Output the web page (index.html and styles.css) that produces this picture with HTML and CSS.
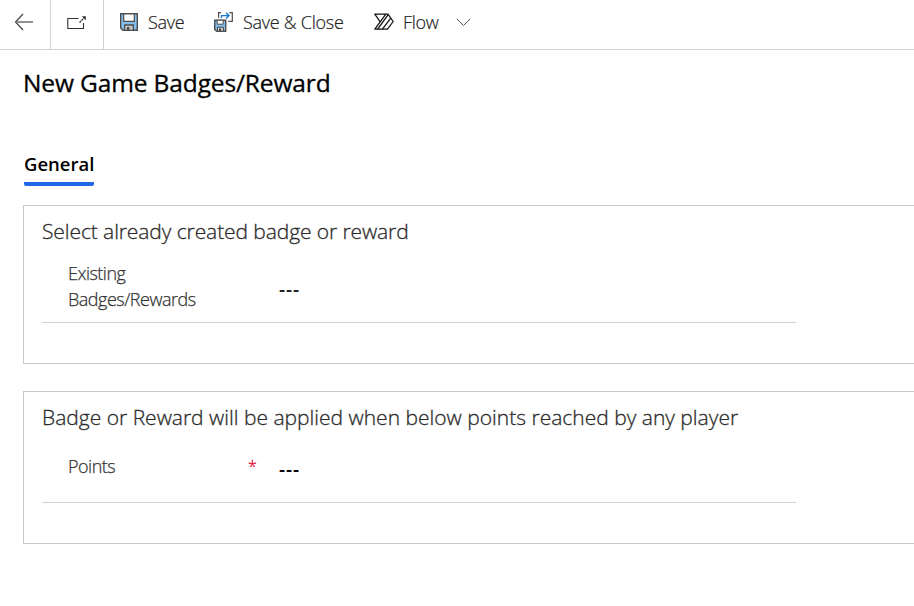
FILE: index.html
```html
<!DOCTYPE html>
<html lang="en">
<head>
<meta charset="utf-8">
<title>New Game Badges/Reward</title>
<link rel="stylesheet" href="styles.css">
</head>
<body>
<header class="toolbar">
  <button class="nav back" aria-label="Back">
    <svg width="20" height="18" viewBox="0 0 20 18" fill="none" stroke="#444"><path d="M9 1 1.5 9 9 17" stroke-width="1.2"/><path d="M1.5 9H19" stroke="#777" stroke-width="1.6"/></svg>
  </button>
  <button class="nav popout" aria-label="Open in new window">
    <svg width="20" height="16" viewBox="0 0 20 16" fill="none" stroke="#333"><path d="M11.5 3.5H.8v10h15.7V8" stroke-width="1.1"/><path d="M12.5 7.5 18 2" stroke-width="1.3" stroke-dasharray="2.2 .7"/><path d="M14.8 1.2h4v4z" fill="#333" stroke="none"/></svg>
  </button>
  <button class="cmd save">
    <svg width="18" height="18" viewBox="0 0 18 18"><path d="M.7.7h16.6v16.6H3L.7 15z" fill="#83beec" stroke="#4d4d4d" stroke-width="1.4"/><path d="M3.7.9h10.6v7.4H3.7z" fill="#fff" stroke="#4d4d4d" stroke-width="1.2"/><path d="M4.7 12h8.6v5.3H4.7z" fill="#c8c8c8" stroke="#4d4d4d" stroke-width="1.3"/><path d="M7 14h2.4v3.5H7z" fill="#4d4d4d"/></svg>
    <span class="label">Save</span>
  </button>
  <button class="cmd close">
    <svg width="20" height="20" viewBox="0 0 20 20"><path d="M.7 8.2h11v11h-9L.7 17.5z" fill="#83beec" stroke="#4d4d4d" stroke-width="1.4"/><path d="M3.2 8.2h6v4h-6z" fill="#fff" stroke="#4d4d4d"/><path d="M3.5 15.2h6v4h-6z" fill="#c8c8c8" stroke="#4d4d4d"/><path d="M5 16.5h2v3H5z" fill="#4d4d4d"/><path d="M7 .7H4.6v5M15.5.7h2.8v8.6h-4" fill="none" stroke="#4d4d4d" stroke-width="1.2"/><path d="M7.5 6V3.6h7M12 .8l3 2.8-3 2.8" fill="none" stroke="#1979ca" stroke-width="1.4"/></svg>
    <span class="label">Save &amp; Close</span>
  </button>
  <button class="cmd flow">
    <svg width="20" height="18" viewBox="0 0 20 18" fill="none" stroke="#111" stroke-width="1.25" stroke-linejoin="round"><path d="M.8 1.2H14l5.2 7.3-5.7 7.7H.8L6.2 8.8z"/><path d="M6.2 8.8 11.8 1.2M3.6 16.2 14.2 1.6M8.4 16.2 16.8 5"/></svg>
    <span class="label">Flow</span>
    <svg class="chevron" width="15" height="9" viewBox="0 0 15 9" fill="none" stroke="#555"><path d="m.7.8 6.8 6.7L14.3.8"/></svg>
  </button>
</header>
<main>
  <h1>New Game Badges/Reward</h1>
  <nav class="tabs"><a class="tab">General</a></nav>
  <section class="card existing">
    <h2>Select already created badge or reward</h2>
    <div class="row">
      <span class="name">Existing<br>Badges/Rewards</span>
      <span class="required"></span>
      <span class="value">---</span>
    </div>
  </section>
  <section class="card points">
    <h2>Badge or Reward will be applied when below points reached by any player</h2>
    <div class="row">
      <span class="name">Points</span>
      <span class="required">*</span>
      <span class="value">---</span>
    </div>
  </section>
</main>
</body>
</html>
```
FILE: styles.css
```css
* { box-sizing: border-box; }
body {
  margin: 0;
  height: 606px;
  overflow: hidden;
  background: #fff;
  color: #333;
  font-family: "Open Sans", "Noto Sans", sans-serif;
}
button {
  padding: 0;
  border: 0;
  background: none;
  color: inherit;
  font: inherit;
}
svg { display: block; flex: none; }
.toolbar {
  display: flex;
  height: 50px;
  border-bottom: 1px solid #d2d2d2;
}
.nav {
  display: flex;
  border-right: 1px solid #d2d2d2;
}
.back { width: 51px; padding: 13px 0 0 14px; }
.popout { width: 53px; padding: 15px 0 0 16px; }
.cmd {
  display: flex;
  align-items: center;
  gap: 10px;
  height: 44px;
  font-size: 18px;
  white-space: nowrap;
}
.save { margin-left: 16px; width: 94px; }
.close { width: 160px; gap: 9px; }
.flow { gap: 9px; }
.chevron { margin-left: 8px; }
.label {
  width: max-content;
  color: #222;
  font-weight: 300;
  letter-spacing: -0.27px;
  -webkit-text-stroke: 0.2px;
}
main { padding-left: 23px; }
h1 {
  margin: 16px 0 0;
  height: 34px;
  color: #000;
  font-size: 24.5px;
  font-weight: 500;
  letter-spacing: -0.13px;
  line-height: 34px;
  white-space: nowrap;
  -webkit-text-stroke: 0.3px;
}
.tabs { display: flex; height: 105px; padding: 50px 0 0 1px; }
.tab {
  width: 70px;
  height: 36px;
  color: #000;
  font-size: 18.5px;
  font-weight: 600;
  line-height: 28px;
  background: linear-gradient(#2266e3, #2266e3) bottom / 100% 4px no-repeat;
  border-radius: 2px;
}
.card {
  height: 159px;
  padding: 10px 0 0 18px;
  border: 1px solid #c8c8c8;
  border-right: 0;
}
h2 {
  margin: 0;
  height: 31px;
  color: #2b2b2b;
  font-size: 21px;
  font-weight: 300;
  line-height: 30px;
  white-space: nowrap;
  -webkit-text-stroke: 0.3px;
}
.existing h2 { letter-spacing: -0.09px; }
.row {
  display: grid;
  grid-template-columns: 180px 31px auto;
  width: 754px;
  height: 76px;
  padding: 13px 0 0 26px;
  border-bottom: 1px solid #d2d2d2;
}
.name {
  font-size: 18px;
  font-weight: 300;
  letter-spacing: -0.5px;
  line-height: 26px;
  -webkit-text-stroke: 0.25px;
}
.value {
  padding-top: 16px;
  color: #222;
  font-size: 19px;
  font-weight: 600;
  letter-spacing: 0.9px;
  line-height: 26px;
}
.required { color: #e3173f; font-size: 16px; line-height: 26px; }
.points { height: 153px; margin-top: 27px; }
.points .row { height: 70px; padding-top: 20px; }
.points .value { padding-top: 3px; color: #000; }
```
